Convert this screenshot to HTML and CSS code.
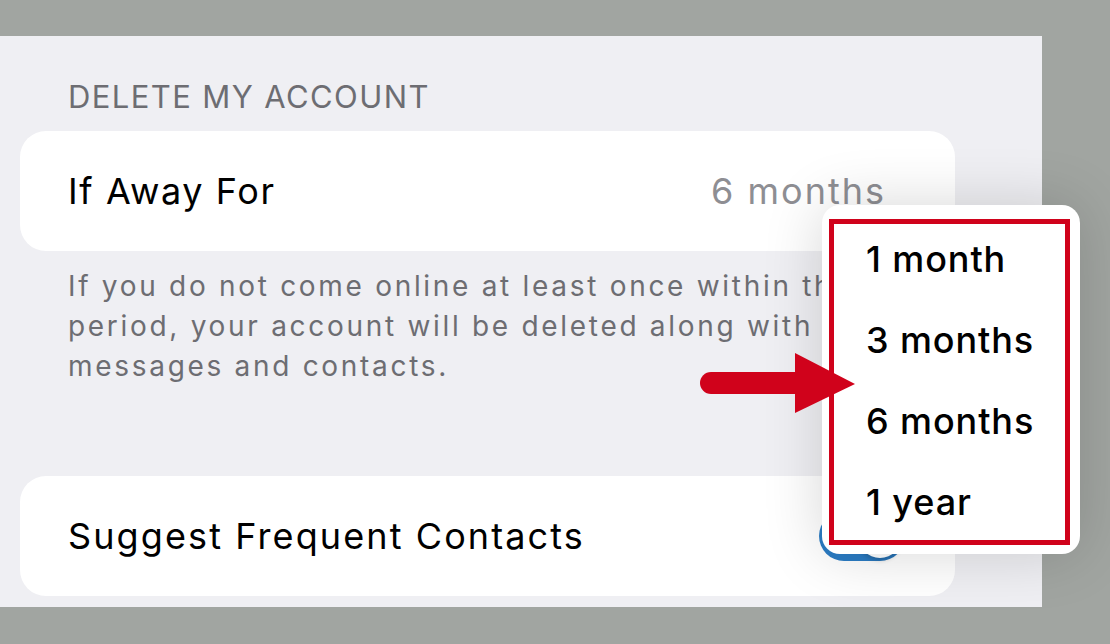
FILE: index.html
```html
<!DOCTYPE html>
<html lang="en">
<head>
    <meta charset="UTF-8">
    <title>Privacy</title>
    <link rel="stylesheet" href="styles.css">
</head>
<body>
    <div class="panel">
        <h2 class="section-title">DELETE MY ACCOUNT</h2>
        <div class="card">
            <span class="label">If Away For</span>
            <span class="value">6 months</span>
        </div>
        <p class="footnote">If you do not come online at least once within this period, your account will be deleted along with all messages and contacts.</p>
        <div class="card card-toggle">
            <span class="label">Suggest Frequent Contacts</span>
            <span class="toggle"><span class="knob"></span></span>
        </div>

        <div class="menu">
            <div class="highlight">
                <p class="option">1 month</p>
                <p class="option">3 months</p>
                <p class="option">6 months</p>
                <p class="option">1 year</p>
            </div>
        </div>

        <svg class="arrow" width="160" height="64" viewBox="0 0 160 64">
            <line x1="11" y1="32" x2="100" y2="32" stroke="#d0021b" stroke-width="22" stroke-linecap="round"/>
            <polygon points="95,2 155,33 95,62" fill="#d0021b"/>
        </svg>
    </div>
</body>
</html>
```

FILE: styles.css
```css
html, body {
    margin: 0;
    padding: 0;
}
body {
    background: #a1a5a1;
    width: 1110px;
    height: 644px;
    overflow: hidden;
    font-family: Inter, "Liberation Sans", sans-serif;
}
.panel {
    position: relative;
    margin-top: 36px;
    width: 1042px;
    height: 571px;
    background: #efeff3;
    box-sizing: border-box;
    padding-top: 41px;
}
.section-title {
    margin: 0;
    padding-left: 68px;
    font-size: 31px;
    line-height: 40px;
    font-weight: 400;
    color: #6d6d72;
    letter-spacing: 1.4px;
}
.card {
    margin: 14px 0 0 20px;
    width: 935px;
    height: 120px;
    background: #fff;
    border-radius: 26px;
    box-sizing: border-box;
    padding: 0 69px 0 48px;
    display: flex;
    align-items: center;
    justify-content: space-between;
}
.label {
    font-size: 36px;
    color: #000;
    letter-spacing: 1.6px;
}
.card-toggle .label {
    letter-spacing: 2.1px;
}
.value {
    font-size: 36px;
    color: #8e8e93;
    letter-spacing: 2px;
}
.footnote {
    margin: 15px 0 0 0;
    padding-left: 68px;
    width: 820px;
    font-size: 28px;
    line-height: 40px;
    color: #6d6d72;
    letter-spacing: 2.7px;
}
.card-toggle {
    margin-top: 90px;
    padding-right: 50px;
}
.toggle {
    position: relative;
    width: 86px;
    height: 50px;
    border-radius: 25px;
    background: #2b7cc4;
}
.knob {
    position: absolute;
    right: 3px;
    top: 3px;
    width: 44px;
    height: 44px;
    border-radius: 50%;
    background: #fff;
    box-shadow: 0 2px 5px rgba(0, 0, 0, .2);
}
.menu {
    position: absolute;
    left: 822px;
    top: 169px;
    width: 258px;
    height: 349px;
    background: #fff;
    border-radius: 18px;
    box-shadow: 0 0 60px rgba(0, 0, 0, .16);
    box-sizing: border-box;
    padding: 14px 10px 9px 7px;
}
.highlight {
    height: 100%;
    border: 5px solid #d0021b;
    box-sizing: border-box;
    padding-top: 13px;
}
.option {
    margin: 0;
    padding-left: 32px;
    font-size: 36px;
    line-height: 44px;
    height: 81px;
    font-weight: 500;
    color: #000;
    letter-spacing: 0.9px;
}
.arrow {
    position: absolute;
    left: 700px;
    top: 315px;
}
```
